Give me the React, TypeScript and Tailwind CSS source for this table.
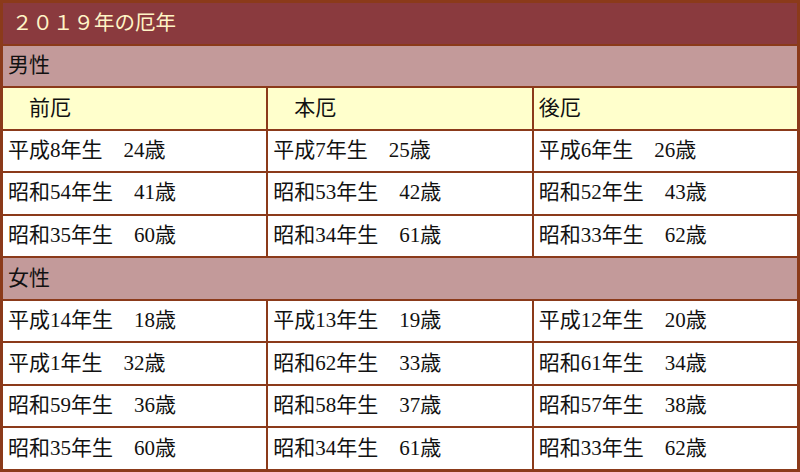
const male = [
  ["平成8年生　24歳", "平成7年生　25歳", "平成6年生　26歳"],
  ["昭和54年生　41歳", "昭和53年生　42歳", "昭和52年生　43歳"],
  ["昭和35年生　60歳", "昭和34年生　61歳", "昭和33年生　62歳"],
];

const female = [
  ["平成14年生　18歳", "平成13年生　19歳", "平成12年生　20歳"],
  ["平成1年生　32歳", "昭和62年生　33歳", "昭和61年生　34歳"],
  ["昭和59年生　36歳", "昭和58年生　37歳", "昭和57年生　38歳"],
  ["昭和35年生　60歳", "昭和34年生　61歳", "昭和33年生　62歳"],
];

function Cell({ text }: { text: string }) {
  return <div className="bg-white flex items-center pl-[5px] pb-[1px]">{text}</div>;
}

export default function App() {
  return (
    <div
      className="w-[800px] h-[472px] bg-[#8b3a1a] p-[3px] grid grid-cols-3 grid-rows-11 gap-[2px] text-[21px] text-[#111] leading-none"
      style={{ fontFamily: '"Liberation Serif", "Noto Sans CJK JP", serif' }}
    >
      <div className="col-span-3 bg-[#8a3a3e] text-[#fff4c6] text-[20.5px] flex items-center pl-[9px]">
        ２０１９年の厄年
      </div>
      <div className="col-span-3 bg-[#c39a9a] flex items-center pl-[5px]">男性</div>
      {["　前厄", "　本厄", "後厄"].map((h) => (
        <div key={h} className="bg-[#ffffcc] flex items-center pl-[5px] whitespace-pre">
          {h}
        </div>
      ))}
      {male.flat().map((t, i) => (
        <Cell key={"m" + i} text={t} />
      ))}
      <div className="col-span-3 bg-[#c39a9a] flex items-center pl-[5px]">女性</div>
      {female.flat().map((t, i) => (
        <Cell key={"f" + i} text={t} />
      ))}
    </div>
  );
}
